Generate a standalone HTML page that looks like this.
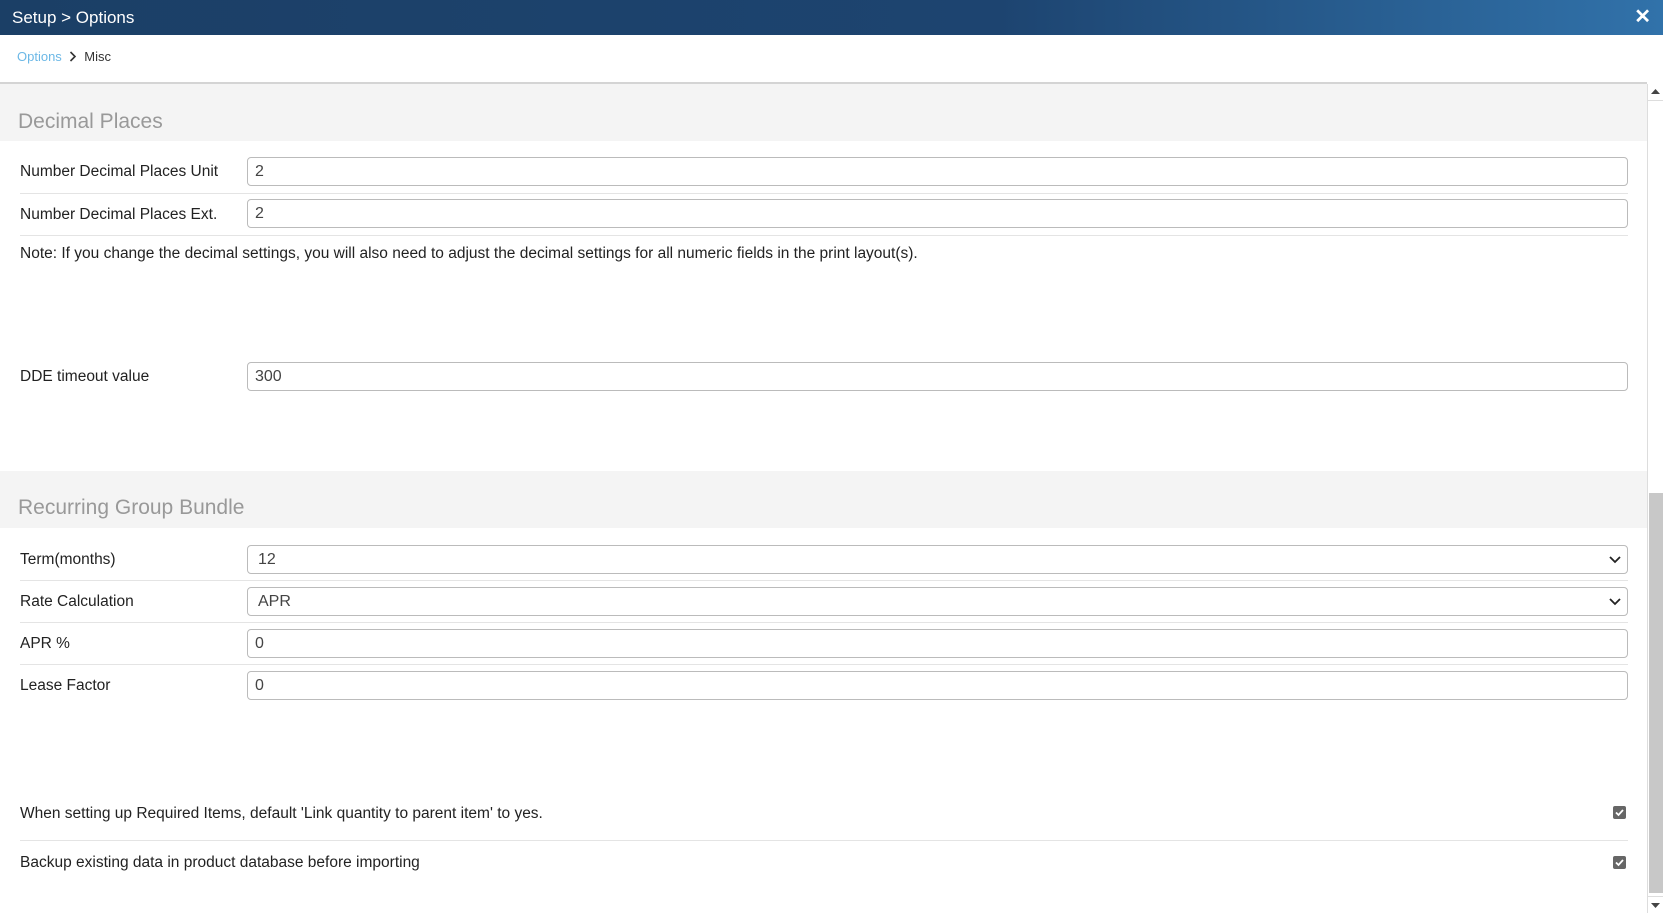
<!DOCTYPE html>
<html><head><meta charset="utf-8"><style>
*{box-sizing:border-box;margin:0;padding:0}
body{width:1663px;height:913px;overflow:hidden;background:#fff;font-family:"Liberation Sans",Arial,sans-serif;color:#333;position:relative}
.hdr{position:absolute;left:0;top:0;width:1663px;height:35px;background:linear-gradient(90deg,#1b3f66 0%,#1d4470 60%,#3172aa 100%);color:#fff;font-size:17px;line-height:35px;padding-left:12px}
.x{position:absolute;right:12px;top:0;font-size:20px;font-weight:bold}
.bc{position:absolute;left:17px;top:49px;font-size:13px;color:#333}
.bc span.a{color:#6cb8e6}
.line{position:absolute;left:0;width:1647px;height:2px;background:#d4d4d4;top:82px}
.sec{position:absolute;left:0;width:1647px;background:#f4f4f4}
.sec div{position:absolute;left:18px;font-size:21px;color:#999}
.lbl{position:absolute;left:20px;font-size:15.5px;color:#222}
.inp{position:absolute;left:247px;width:1381px;height:29px;border:1px solid #bbb;border-radius:4px;font-size:16px;line-height:27px;padding-left:7px;color:#444}
.sep{position:absolute;left:20px;width:1608px;height:1px;background:#e4e4e4}
.sel svg{position:absolute;right:6px;top:9px}
.cb{position:absolute;left:1613px;width:13px;height:13px;background:#666;border-radius:2px}
.sb{position:absolute;left:1647px;top:84px;width:16px;height:829px;background:#fff;border-left:1px solid #ddd}
</style></head><body>
<div class="hdr">Setup &gt; Options<span class="x">✕</span></div>
<div class="bc"><span class="a">Options</span> &nbsp;<svg width="8" height="11" viewBox="0 0 8 11" style="vertical-align:-1px"><path d="M1.5 1l4.5 4.5-4.5 4.5" stroke="#333" stroke-width="1.6" fill="none"/></svg>&nbsp; Misc</div>
<div class="line"></div>
<div class="sec" style="top:84px;height:57px"><div style="top:26px">Decimal Places</div></div>
<div class="lbl" style="top:163px">Number Decimal Places Unit</div>
<div class="inp" style="top:157px">2</div>
<div class="sep" style="top:193px"></div>
<div class="lbl" style="top:206px">Number Decimal Places Ext.</div>
<div class="inp" style="top:199px">2</div>
<div class="sep" style="top:235px"></div>
<div class="lbl" style="top:245px">Note: If you change the decimal settings, you will also need to adjust the decimal settings for all numeric fields in the print layout(s).</div>
<div class="lbl" style="top:368px">DDE timeout value</div>
<div class="inp" style="top:362px">300</div>
<div class="sec" style="top:471px;height:57px"><div style="top:25px">Recurring Group Bundle</div></div>
<div class="lbl" style="top:551px">Term(months)</div>
<div class="inp sel" style="top:545px;padding-left:10px">12<svg width="12" height="9"><path d="M1 2l5 5 5-5" stroke="#222" stroke-width="1.8" fill="none"/></svg></div>
<div class="sep" style="top:580px"></div>
<div class="lbl" style="top:593px">Rate Calculation</div>
<div class="inp sel" style="top:587px;padding-left:10px">APR<svg width="12" height="9"><path d="M1 2l5 5 5-5" stroke="#222" stroke-width="1.8" fill="none"/></svg></div>
<div class="sep" style="top:622px"></div>
<div class="lbl" style="top:635px">APR %</div>
<div class="inp" style="top:629px">0</div>
<div class="sep" style="top:664px"></div>
<div class="lbl" style="top:677px">Lease Factor</div>
<div class="inp" style="top:671px">0</div>
<div class="lbl" style="top:805px">When setting up Required Items, default 'Link quantity to parent item' to yes.</div>
<div class="cb" style="top:806px"><svg width="13" height="13"><path d="M3 6.5l2.5 2.5 4.5-5" stroke="#fff" stroke-width="1.8" fill="none"/></svg></div>
<div class="sep" style="top:840px"></div>
<div class="lbl" style="top:854px">Backup existing data in product database before importing</div>
<div class="cb" style="top:856px"><svg width="13" height="13"><path d="M3 6.5l2.5 2.5 4.5-5" stroke="#fff" stroke-width="1.8" fill="none"/></svg></div>
<div class="sb">
<div style="position:absolute;left:0;top:0;width:15px;height:17px;border-bottom:1px solid #ddd"><svg width="15" height="16"><path d="M3 10l4.5-5 4.5 5z" fill="#444"/></svg></div>
<div style="position:absolute;left:1px;top:409px;width:14px;height:400px;background:#c8c8c8"></div>
<div style="position:absolute;left:0;bottom:0;width:15px;height:17px;border-top:1px solid #ddd"><svg width="15" height="16"><path d="M3 6l4.5 5 4.5-5z" fill="#444"/></svg></div>
</div>
</body></html>
